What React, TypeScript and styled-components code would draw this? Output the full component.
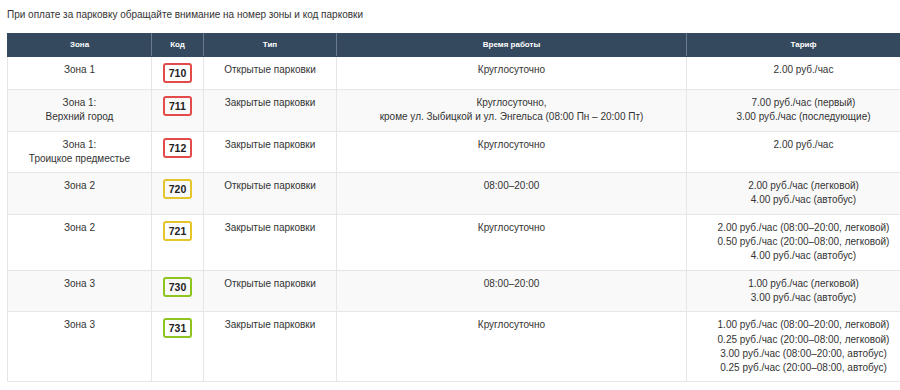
import React from "react";
import styled, { createGlobalStyle } from "styled-components";

const Global = createGlobalStyle`
  html, body { margin: 0; padding: 0; background: #ffffff; overflow: hidden; }
  body { font-family: "Liberation Sans", Arial, sans-serif; color: #333333; }
`;

const Page = styled.div`
  width: 900px;
  height: 390px;
  overflow: hidden;
  padding: 8px 0 0 7px;
  box-sizing: border-box;
`;

const Title = styled.p`
  margin: 0 0 11px 0;
  font-size: 10px;
  line-height: 14px;
  color: #333333;
`;

const Table = styled.table`
  border-collapse: collapse;
  table-layout: fixed;
  width: 913px;
  font-size: 10px;
  line-height: 14.3px;
  color: #333333;
  border: 1px solid #e6e6e6;
`;

const HeadCell = styled.th`
  background: #34495e;
  color: #ffffff;
  font-size: 8px;
  font-weight: bold;
  height: 22px;
  padding: 0 6px;
  text-align: center;
  vertical-align: middle;
  border: 1px solid #6b7b8c;
  border-top-color: #34495e;
  border-bottom-color: #34495e;
  &:first-child { border-left-color: #34495e; }
`;

const Row = styled.tr<{ $striped: boolean }>`
  background: ${(p) => (p.$striped ? "#f9f9f9" : "#ffffff")};
`;

const Cell = styled.td`
  border: 1px solid #e6e6e6;
  padding: 6px 6px;
  text-align: center;
  vertical-align: top;
`;

const Badge = styled.span<{ $color: string }>`
  display: inline-block;
  box-sizing: border-box;
  width: 29px;
  height: 20px;
  line-height: 16px;
  border: 2px solid ${(p) => p.$color};
  border-radius: 3px;
  font-size: 10.5px;
  font-weight: bold;
  color: #222222;
  text-align: center;
`;

const RED = "#e34b4b";
const YELLOW = "#e5c52a";
const GREEN = "#8fc31f";

type R = { zone: string[]; code: string; color: string; type: string; time: string[]; tariff: string[] };

const rows: R[] = [
  { zone: ["Зона 1"], code: "710", color: RED, type: "Открытые парковки", time: ["Круглосуточно"], tariff: ["2.00 руб./час"] },
  {
    zone: ["Зона 1:", "Верхний город"], code: "711", color: RED, type: "Закрытые парковки",
    time: ["Круглосуточно,", "кроме ул. Зыбицкой и ул. Энгельса (08:00 Пн – 20:00 Пт)"],
    tariff: ["7.00 руб./час (первый)", "3.00 руб./час (последующие)"],
  },
  { zone: ["Зона 1:", "Троицкое предместье"], code: "712", color: RED, type: "Закрытые парковки", time: ["Круглосуточно"], tariff: ["2.00 руб./час"] },
  { zone: ["Зона 2"], code: "720", color: YELLOW, type: "Открытые парковки", time: ["08:00–20:00"], tariff: ["2.00 руб./час (легковой)", "4.00 руб./час (автобус)"] },
  {
    zone: ["Зона 2"], code: "721", color: YELLOW, type: "Закрытые парковки", time: ["Круглосуточно"],
    tariff: ["2.00 руб./час (08:00–20:00, легковой)", "0.50 руб./час (20:00–08:00, легковой)", "4.00 руб./час (автобус)"],
  },
  { zone: ["Зона 3"], code: "730", color: GREEN, type: "Открытые парковки", time: ["08:00–20:00"], tariff: ["1.00 руб./час (легковой)", "3.00 руб./час (автобус)"] },
  {
    zone: ["Зона 3"], code: "731", color: GREEN, type: "Закрытые парковки", time: ["Круглосуточно"],
    tariff: [
      "1.00 руб./час (08:00–20:00, легковой)",
      "0.25 руб./час (20:00–08:00, легковой)",
      "3.00 руб./час (08:00–20:00, автобус)",
      "0.25 руб./час (20:00–08:00, автобус)",
    ],
  },
];

const Lines = ({ items }: { items: string[] }) => (
  <>
    {items.map((t, i) => (
      <React.Fragment key={i}>
        {i > 0 && <br />}
        {t}
      </React.Fragment>
    ))}
  </>
);

export default function App() {
  return (
    <>
      <Global />
      <Page>
        <Title>При оплате за парковку обращайте внимание на номер зоны и код парковки</Title>
        <Table>
          <colgroup>
            <col style={{ width: 144 }} />
            <col style={{ width: 52 }} />
            <col style={{ width: 133 }} />
            <col style={{ width: 350 }} />
            <col style={{ width: 234 }} />
          </colgroup>
          <thead>
            <tr>
              <HeadCell>Зона</HeadCell>
              <HeadCell>Код</HeadCell>
              <HeadCell>Тип</HeadCell>
              <HeadCell>Время работы</HeadCell>
              <HeadCell>Тариф</HeadCell>
            </tr>
          </thead>
          <tbody>
            {rows.map((r, i) => (
              <Row key={r.code} $striped={i % 2 === 1}>
                <Cell><Lines items={r.zone} /></Cell>
                <Cell><Badge $color={r.color}>{r.code}</Badge></Cell>
                <Cell>{r.type}</Cell>
                <Cell><Lines items={r.time} /></Cell>
                <Cell><Lines items={r.tariff} /></Cell>
              </Row>
            ))}
          </tbody>
        </Table>
      </Page>
    </>
  );
}
